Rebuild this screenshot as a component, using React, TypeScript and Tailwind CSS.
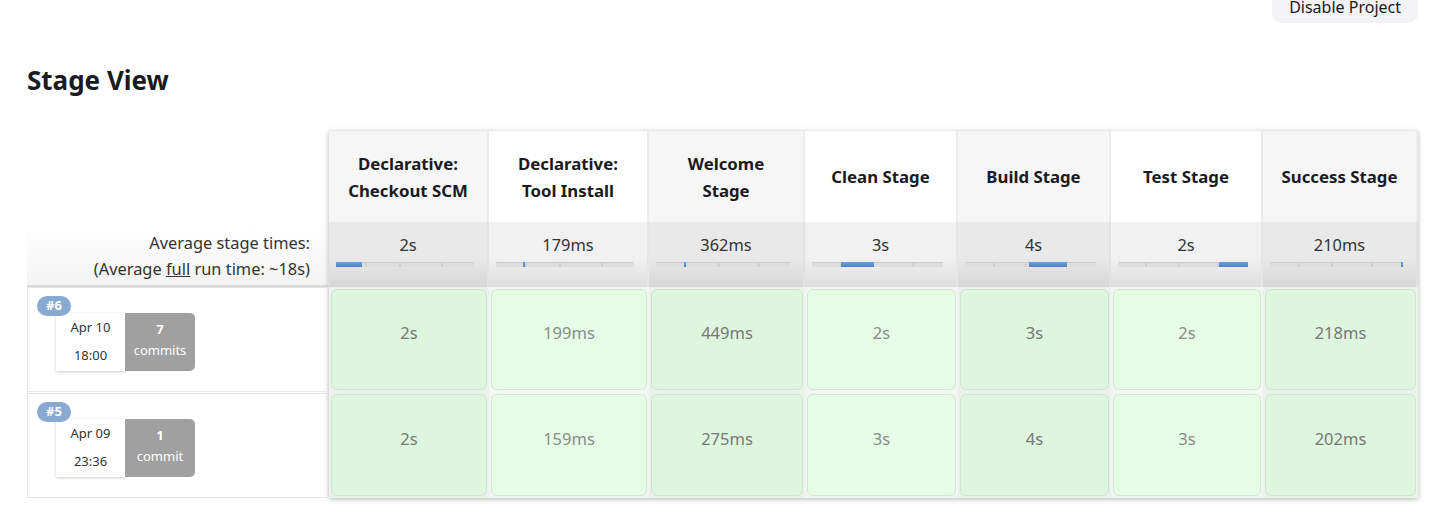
import React from "react";

type Stage = {
    name: string[];
    avg: string;
    start: number;
    end: number;
};

const stages: Stage[] = [
    { name: ["Declarative:", "Checkout SCM"], avg: "2s", start: 0, end: 0.185 },
    { name: ["Declarative:", "Tool Install"], avg: "179ms", start: 0.193, end: 0.2 },
    { name: ["Welcome", "Stage"], avg: "362ms", start: 0.212, end: 0.225 },
    { name: ["Clean Stage"], avg: "3s", start: 0.225, end: 0.47 },
    { name: ["Build Stage"], avg: "4s", start: 0.485, end: 0.78 },
    { name: ["Test Stage"], avg: "2s", start: 0.78, end: 1 },
    { name: ["Success Stage"], avg: "210ms", start: 0.985, end: 1 },
];

const builds = [
    { id: "#6", date: "Apr 10", time: "18:00", count: "7", label: "commits", times: ["2s", "199ms", "449ms", "2s", "3s", "2s", "218ms"] },
    { id: "#5", date: "Apr 09", time: "23:36", count: "1", label: "commit", times: ["2s", "159ms", "275ms", "3s", "4s", "3s", "202ms"] },
];

const ticks = [0.21, 0.46, 0.76];

function Bar({ start, end }: { start: number; end: number }) {
    return (
        <div className="relative mx-[7px] mr-[13px] h-[5px] bg-[#dedede] shadow-[inset_0_1px_1px_rgba(0,0,0,0.08)]">
            {ticks.map((t) => (
                <div
                    key={t}
                    className="absolute top-0 h-full w-[2px] bg-[#cfcfcf]"
                    style={{ left: `${t * 100}%` }}
                />
            ))}
            <div
                className="absolute top-0 h-full min-w-[2px] bg-[linear-gradient(to_bottom,#6f9de3,#4f7fcc)]"
                style={{ left: `${start * 100}%`, width: `${(end - start) * 100}%` }}
            />
        </div>
    );
}

export default function App() {
    return (
        <div className="h-[522px] w-full overflow-hidden bg-white font-['Noto_Sans',sans-serif] text-[#1a1a22]">
            {/* Top action */}
            <div className="flex justify-end pr-[31px]">
                <button className="-mt-[12px] h-[35px] rounded-[10px] bg-[#f3f3f6] px-[17px] pt-[2px] text-[16px] text-[#1a1a22]">
                    Disable Project
                </button>
            </div>

            <h2 className="ml-[27px] mt-[41px] text-[26px] font-bold leading-[32px]">Stage View</h2>

            <div className="ml-[27px] mt-[35px] flex">
                {/* Left column */}
                <div className="flex w-[302px] flex-col">
                    <div className="h-[91px]" />
                    <div className="mr-[1px] flex h-[65px] flex-col items-end justify-center border-b-2 border-[#d9d9d9] bg-[linear-gradient(to_bottom,#ffffff,#f4f4f4)] pr-[18px] pt-[4px] text-[16.4px] leading-[26px] text-[#333]">
                        <div>Average stage times:</div>
                        <div>
                            (Average <span className="underline">full</span> run time: ~18s)
                        </div>
                    </div>
                    {builds.map((b, i) => (
                        <div
                            key={b.id}
                            className={
                                i === 0
                                    ? "relative mr-[1px] h-[105px] border border-[#e6e6e6]"
                                    : "relative mr-[1px] mt-[1px] h-[105px] border border-[#e6e6e6]"
                            }
                        >
                            <div className="ml-[28px] mt-[25px] flex">
                                <div className="flex h-[58px] w-[69px] flex-col items-center justify-center bg-white pb-[2px] text-[13px] leading-[28px] text-[#333] shadow-[0_1px_3px_rgba(0,0,0,0.2)]">
                                    <div>{b.date}</div>
                                    <div>{b.time}</div>
                                </div>
                                <div className="flex h-[58px] w-[70px] flex-col items-center justify-center rounded-r-[5px] bg-[#a0a0a0] pb-[5px] text-[13px] leading-[21px] text-white">
                                    <div className="font-bold">{b.count}</div>
                                    <div>{b.label}</div>
                                </div>
                            </div>
                            <div className="absolute left-[9px] top-[8px] flex h-[20px] w-[34px] items-center justify-center rounded-full bg-[#88a9d2] text-[13px] font-bold text-white">
                                {b.id}
                            </div>
                        </div>
                    ))}
                </div>

                {/* Stage table */}
                <div className="grid grid-cols-[160px_160px_156px_153px_153px_152px_155px] grid-rows-[91px_65px_105px_106px] shadow-[0_1px_5px_rgba(0,0,0,0.3)]">
                    {stages.map((s, i) => (
                        <div
                            key={"h" + i}
                            className={
                                i % 2 === 0
                                    ? "flex flex-col items-center justify-center border-r-2 border-[#ececec] bg-[#f6f6f6] text-center text-[16.8px] font-bold leading-[27px]"
                                    : "flex flex-col items-center justify-center border-r-2 border-[#ececec] bg-white text-center text-[16.8px] font-bold leading-[27px]"
                            }
                        >
                            {s.name.map((n) => (
                                <div key={n}>{n}</div>
                            ))}
                        </div>
                    ))}
                    {stages.map((s, i) => (
                        <div
                            key={"a" + i}
                            className={
                                i % 2 === 0
                                    ? "flex flex-col border-r-2 border-[#e2e2e2] bg-[linear-gradient(to_bottom,#e9e9e9_55%,#d6d6d6)] pt-[11px]"
                                    : "flex flex-col border-r-2 border-[#e6e6e6] bg-[linear-gradient(to_bottom,#f1f1f1_55%,#dddddd)] pt-[11px]"
                            }
                        >
                            <div className="mb-[5px] text-center text-[16.4px] leading-[24px] text-[#333]">{s.avg}</div>
                            <Bar start={s.start} end={s.end} />
                        </div>
                    ))}
                    {builds.map((b) =>
                        b.times.map((t, i) => (
                            <div
                                key={b.id + i}
                                className={i % 2 === 0 ? "bg-[#eaf3ea] p-[2px]" : "bg-[#f1f8f1] p-[2px]"}
                            >
                                <div
                                    className={
                                        i % 2 === 0
                                            ? "flex h-full items-center justify-center rounded-[6px] border border-[#d2e2d2] bg-[#ddf6dd] pb-[12px] text-[16.5px] text-[#777]"
                                            : "flex h-full items-center justify-center rounded-[6px] border border-[#d6e6d6] bg-[#e5fee5] pb-[12px] text-[16.5px] text-[#8a8a8a]"
                                    }
                                >
                                    {t}
                                </div>
                            </div>
                        ))
                    )}
                </div>
            </div>
        </div>
    );
}
